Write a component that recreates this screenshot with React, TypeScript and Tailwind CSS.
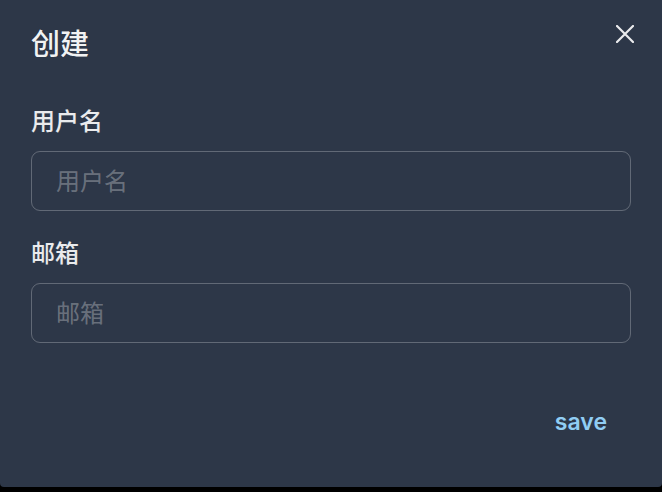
export default function App() {
    return (
        <div
            className="w-[662px] h-[492px] bg-black overflow-hidden"
            style={{ fontFamily: '"Inter", "Noto Sans CJK SC", sans-serif' }}
        >
            <div className="relative h-[487px] bg-[#2d3748] rounded-bl-[4px] rounded-br-[4px] flex flex-col">
                {/* Header */}
                <div className="pt-[24px] pl-[31px] text-[29px] leading-[42px] font-medium text-white/95">
                    创建
                </div>
                <button className="absolute top-[19px] right-[22px] w-[30px] h-[30px] flex items-center justify-center text-white/90">
                    <svg width="18" height="18" viewBox="0 0 18 18" fill="none">
                        <path d="M1 1 L17 17 M17 1 L1 17" stroke="currentColor" strokeWidth="2.2" strokeLinecap="round" />
                    </svg>
                </button>

                {/* Body */}
                <div className="px-[31px] mt-[38px] flex flex-col">
                    <label className="text-[24px] leading-[36px] font-medium text-white/90">用户名</label>
                    <input
                        placeholder="用户名"
                        className="mt-[11px] h-[60px] w-full rounded-[9px] border border-white/25 bg-transparent px-[24px] text-[24px] text-white outline-none placeholder:text-white/30"
                    />
                    <label className="mt-[25px] text-[24px] leading-[36px] font-medium text-white/90">邮箱</label>
                    <input
                        placeholder="邮箱"
                        className="mt-[11px] h-[60px] w-full rounded-[9px] border border-white/25 bg-transparent px-[24px] text-[24px] text-white outline-none placeholder:text-white/30"
                    />
                </div>

                {/* Footer */}
                <div className="mt-[49px] px-[31px] flex justify-end">
                    <button className="h-[60px] px-[24px] text-[23px] font-semibold text-[#90cdf4]">save</button>
                </div>
            </div>
        </div>
    );
}
